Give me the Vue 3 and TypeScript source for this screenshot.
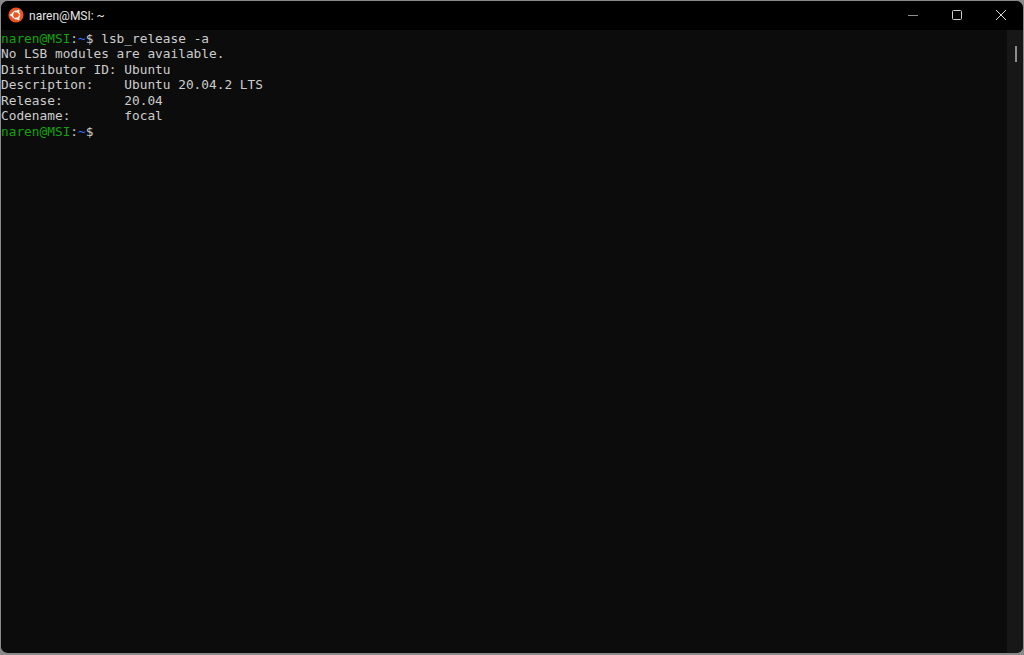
<script setup lang="ts">
interface Seg { t: string; c?: string }
const lines: Seg[][] = [
  [{ t: 'naren@MSI', c: 'g' }, { t: ':' }, { t: '~', c: 'b' }, { t: '$ lsb_release -a' }],
  [{ t: 'No LSB modules are available.' }],
  [{ t: 'Distributor ID: Ubuntu' }],
  [{ t: 'Description:    Ubuntu 20.04.2 LTS' }],
  [{ t: 'Release:        20.04' }],
  [{ t: 'Codename:       focal' }],
  [{ t: 'naren@MSI', c: 'g' }, { t: ':' }, { t: '~', c: 'b' }, { t: '$' }],
]
</script>

<template>
  <div class="window">
    <header class="titlebar">
      <div class="title">
        <svg class="logo" width="16" height="16" viewBox="0 0 16 16">
          <circle cx="8" cy="8" r="7.6" fill="#e95420" />
          <circle cx="8" cy="8" r="3.6" fill="none" stroke="#fff" stroke-width="1.6" />
          <path d="M10.2 8h3M6.9 6.1L5.4 3.5M6.9 9.9l-1.5 2.6" stroke="#e95420" stroke-width="0.7" fill="none" />
          <circle cx="3.4" cy="8" r="1.2" fill="#fff" />
          <circle cx="10.3" cy="4" r="1.2" fill="#fff" />
          <circle cx="10.3" cy="12" r="1.2" fill="#fff" />
        </svg>
        <span>naren@MSI: ~</span>
      </div>
      <div class="controls">
        <svg width="44" height="29" viewBox="0 0 44 29"><path d="M17 14.5h10" stroke="#8f8f8f" fill="none" /></svg>
        <svg width="44" height="29" viewBox="0 0 44 29"><rect x="17.5" y="9.5" width="9" height="9" rx="1" stroke="#d0d0d0" fill="none" /></svg>
        <svg width="44" height="29" viewBox="0 0 44 29"><path d="M17 9l10 10M27 9L17 19" stroke="#d8d8d8" fill="none" /></svg>
      </div>
    </header>
    <main class="body">
      <pre class="term"><div v-for="(line, i) in lines" :key="i" class="line"><span v-for="(s, j) in line" :key="j" :class="s.c">{{ s.t }}</span></div></pre>
      <aside class="scroll"><div class="thumb"></div></aside>
    </main>
  </div>
</template>

<style>
html, body { margin: 0; background: #8a8a8a; }
</style>

<style scoped>
.window {
  width: 1024px;
  height: 655px;
  box-sizing: border-box;
  border: 1px solid #8a8a8a;
  border-bottom-width: 2px;
  border-radius: 8px;
  background: #0c0c0c;
  overflow: hidden;
  display: flex;
  flex-direction: column;
}
.titlebar {
  height: 29px;
  flex: none;
  background: #000;
  display: flex;
  align-items: center;
  justify-content: space-between;
}
.title {
  display: flex;
  align-items: center;
  gap: 5px;
  padding-left: 7px;
  font: 12px Roboto, "Noto Sans", sans-serif;
  color: #e6e6e6;
}
.logo { margin-bottom: 2px; }
.controls { display: flex; align-self: flex-start; }
.controls svg { display: block; }
.body { flex: 1; display: flex; min-height: 0; }
.term {
  flex: 1;
  margin: 0;
  padding-top: 0.9px;
  font: 12.8px/15.5px "DejaVu Sans Mono", "Liberation Mono", monospace;
  color: #cccccc;
}
.line { height: 15.5px; }
.g { color: #13a10e; }
.b { color: #3b78ff; }
.scroll {
  width: 16px;
  flex: none;
  background: #171717;
  padding: 16px 0 0 8px;
  box-sizing: border-box;
}
.thumb { width: 2px; height: 16px; background: #8c8c8c; }
</style>
